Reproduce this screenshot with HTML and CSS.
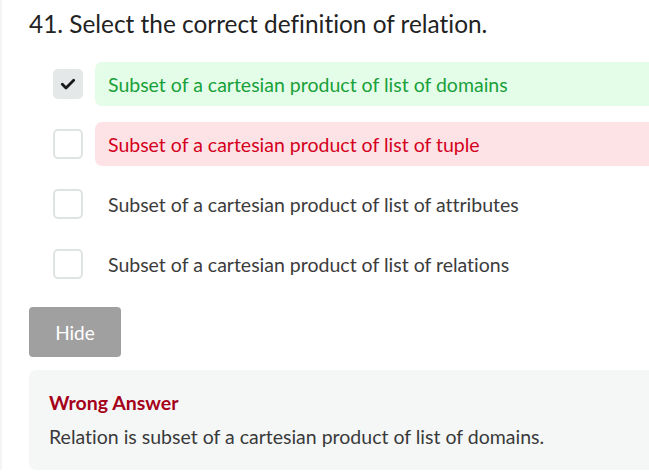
FILE: index.html
```html
<!DOCTYPE html>
<html>
<head>
<meta charset="utf-8">
<link rel="stylesheet" href="styles.css">
</head>
<body>
<div class="page">
  <h1 class="question">41. Select the correct definition of relation.</h1>
  <ul class="options">
    <li class="option">
      <span class="box checked">
        <svg width="16" height="16" viewBox="0 0 16 16"><path d="M2.3 8.3 L6 12 L13.7 4.3" fill="none" stroke="#1a1a1a" stroke-width="2.8" stroke-linecap="round" stroke-linejoin="round"/></svg>
      </span>
      <span class="label correct">Subset of a cartesian product of list of domains</span>
    </li>
    <li class="option">
      <span class="box"></span>
      <span class="label wrong">Subset of a cartesian product of list of tuple</span>
    </li>
    <li class="option">
      <span class="box"></span>
      <span class="label">Subset of a cartesian product of list of attributes</span>
    </li>
    <li class="option">
      <span class="box"></span>
      <span class="label">Subset of a cartesian product of list of relations</span>
    </li>
  </ul>
  <button class="hide-btn">Hide</button>
  <div class="feedback">
    <div class="feedback-title">Wrong Answer</div>
    <div class="feedback-text">Relation is subset of a cartesian product of list of domains.</div>
  </div>
</div>
</body>
</html>
```

FILE: styles.css
```css
html, body {
  margin: 0;
  padding: 0;
  background: #ffffff;
}
body {
  font-family: Lato, "Open Sans", sans-serif;
  font-variant-ligatures: none;
  color: #3a3a3a;
  overflow: hidden;
  border-left: 2px solid #f3f4f4;
}
.page {
  padding: 7px 0 0 27px;
  width: 630px;
}
.question {
  margin: 0;
  font-size: 24.4px;
  font-weight: 400;
  line-height: 34px;
  color: #222222;
}
.options {
  list-style: none;
  margin: 0;
  padding: 21px 0 0 24px;
  display: flex;
  flex-direction: column;
  gap: 16px;
}
.option {
  display: flex;
  align-items: center;
  gap: 12px;
  height: 44px;
}
.box {
  width: 26px;
  height: 26px;
  border: 2px solid #dfe3e3;
  border-radius: 5px;
  background: #ffffff;
  display: flex;
  align-items: center;
  justify-content: center;
  flex: none;
}
.box.checked {
  background: #e5e8e9;
  border-color: #e5e8e9;
}
.label {
  flex: 1;
  height: 44px;
  display: flex;
  align-items: center;
  padding-left: 13px;
  border-radius: 7px;
  font-size: 19.5px;
  color: #3c3c3c;
}
.label.correct {
  background: #e4fde9;
  color: #19a03a;
}
.label.wrong {
  background: #fee3e6;
  color: #d4001d;
}
.hide-btn {
  margin-top: 21px;
  width: 92px;
  height: 50px;
  border: none;
  border-radius: 4px;
  background: #a0a0a0;
  color: #ffffff;
  font-family: Lato, sans-serif;
  font-size: 19px;
  padding: 0;
  display: block;
}
.feedback {
  margin-top: 13px;
  height: 100px;
  box-sizing: border-box;
  background: #f5f7f7;
  border-radius: 7px;
  padding: 20px 20px;
}
.feedback-title {
  font-size: 19.5px;
  font-weight: 700;
  color: #a5001a;
  line-height: 26px;
}
.feedback-text {
  margin-top: 9px;
  font-size: 19.5px;
  line-height: 24px;
  color: #3a3a3a;
}
```
